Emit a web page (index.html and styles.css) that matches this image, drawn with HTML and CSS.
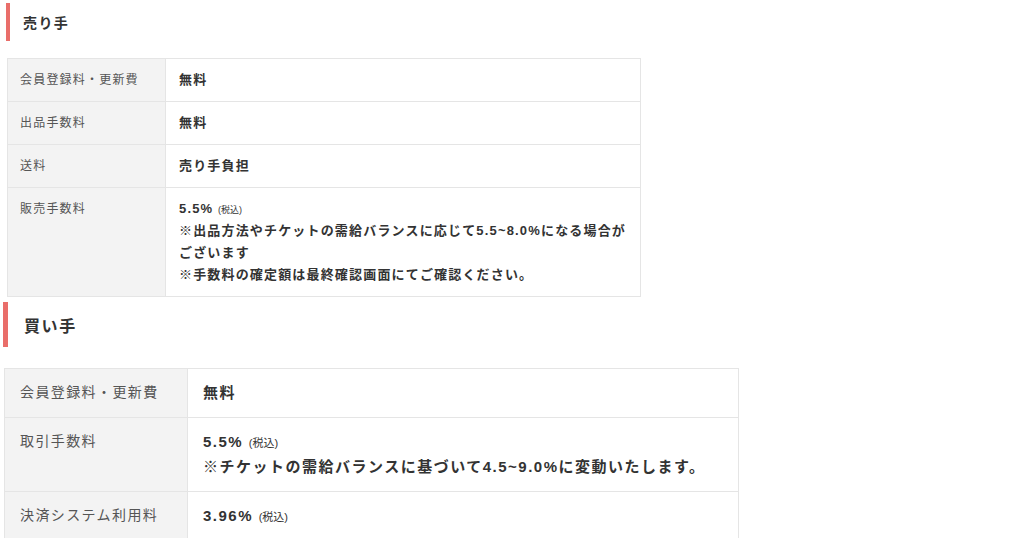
FILE: index.html
```html
<!DOCTYPE html>
<html lang="ja">
<head>
    <meta charset="UTF-8">
    <meta name="viewport" content="width=device-width, initial-scale=1.0">
    <title>手数料</title>
    <link rel="stylesheet" href="styles.css">
</head>
<body>

    <section class="sec sec-seller">
        <h2 class="heading">売り手</h2>
        <table class="fee-table">
            <tr>
                <th>会員登録料・更新費</th>
                <td>無料</td>
            </tr>
            <tr>
                <th>出品手数料</th>
                <td>無料</td>
            </tr>
            <tr>
                <th>送料</th>
                <td>売り手負担</td>
            </tr>
            <tr>
                <th>販売手数料</th>
                <td>5.5% <small>(税込)</small><br>※出品方法やチケットの需給バランスに応じて5.5~8.0%になる場合がございます<br>※手数料の確定額は最終確認画面にてご確認ください。</td>
            </tr>
        </table>
    </section>

    <section class="sec sec-buyer">
        <h2 class="heading">買い手</h2>
        <table class="fee-table">
            <tr>
                <th>会員登録料・更新費</th>
                <td>無料</td>
            </tr>
            <tr>
                <th>取引手数料</th>
                <td>5.5% <small>(税込)</small><br>※チケットの需給バランスに基づいて4.5~9.0%に変動いたします。</td>
            </tr>
            <tr>
                <th>決済システム利用料</th>
                <td>3.96% <small>(税込)</small></td>
            </tr>
        </table>
    </section>

</body>
</html>
```

FILE: styles.css
```css
body {
    margin: 0;
    background-color: white;
    font-family: "Liberation Sans", "Noto Sans CJK JP", sans-serif;
    color: #333;
}
.heading {
    margin: 0;
    display: flex;
    align-items: center;
    font-weight: bold;
    letter-spacing: 0.1em;
    border-left-style: solid;
    border-left-color: #e96e6a;
}
.fee-table {
    border-collapse: collapse;
    table-layout: fixed;
    margin-left: 1px;
}
.fee-table th,
.fee-table td {
    border: 1px solid #e5e5e5;
    text-align: left;
    vertical-align: top;
    letter-spacing: 0.1em;
}
.fee-table th {
    background-color: #f3f3f3;
    color: #555;
    font-weight: normal;
}
.fee-table td {
    font-weight: bold;
    color: #333;
}
.fee-table small {
    font-weight: normal;
    letter-spacing: 0;
    line-height: 0;
}

/* 売り手 */
.sec-seller {
    padding: 3px 0 0 6px;
}
.sec-seller .heading {
    height: 38px;
    border-left-width: 4px;
    padding-left: 13px;
    font-size: 14px;
}
.sec-seller .fee-table {
    width: 634px;
    margin-top: 17px;
}
.sec-seller .fee-table th,
.sec-seller .fee-table td {
    padding: 10px 12px;
    line-height: 22px;
}
.sec-seller .fee-table th {
    width: 133px;
    font-size: 12px;
}
.sec-seller .fee-table td {
    padding-left: 13px;
    padding-right: 4px;
    font-size: 13px;
    letter-spacing: 0.09em;
}
.sec-seller .fee-table small {
    font-size: 9px;
}

/* 買い手 */
.sec-buyer {
    padding: 5px 0 0 3px;
}
.sec-buyer .heading {
    height: 45px;
    border-left-width: 5px;
    padding-left: 16px;
    font-size: 16px;
}
.sec-buyer .fee-table {
    width: 735px;
    margin-top: 21px;
}
.sec-buyer .fee-table th,
.sec-buyer .fee-table td {
    padding: 11px 15px 12px;
    line-height: 25px;
}
.sec-buyer .fee-table th {
    width: 152px;
    font-size: 14px;
}
.sec-buyer .fee-table td {
    font-size: 15px;
}
.sec-buyer .fee-table small {
    font-size: 11px;
}
```
